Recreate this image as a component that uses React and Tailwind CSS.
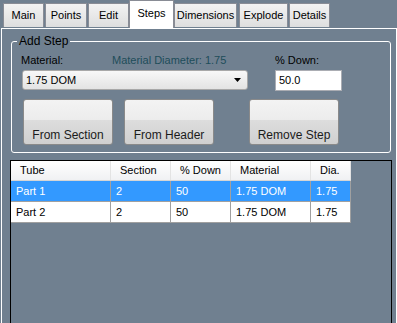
const tabs = [
  { label: "Main", w: "w-[41px]", gap: "mr-[1px]" },
  { label: "Points", w: "w-[42px]", gap: "mr-[1px]" },
  { label: "Edit", w: "w-[41px]", gap: "" },
  { label: "Steps", w: "w-[45px]", gap: "", active: true },
  { label: "Dimensions", w: "w-[63px]", gap: "mr-[2px]" },
  { label: "Explode", w: "w-[49px]", gap: "mr-[1px]" },
  { label: "Details", w: "w-[41px]", gap: "" },
];

const columns = [
  { label: "Tube", w: "w-[100px]" },
  { label: "Section", w: "w-[60px]" },
  { label: "% Down", w: "w-[60px]" },
  { label: "Material", w: "w-[80px]" },
  { label: "Dia.", w: "w-[40px]" },
];

const rows = [
  ["Part 1", "2", "50", "1.75 DOM", "1.75"],
  ["Part 2", "2", "50", "1.75 DOM", "1.75"],
];

export default function App() {
  return (
    <div className="w-[397px] h-[323px] overflow-hidden bg-[#708090] font-['Liberation_Sans',Arial,sans-serif] text-[11px] leading-[13px] text-black">
      {/* tab strip */}
      <div className="flex h-[28px] items-end pl-[3px]">
        {tabs.map((t) =>
          t.active ? (
            <div
              key={t.label}
              className={`${t.w} ${t.gap} flex h-[28px] items-center justify-center border-x border-t border-[#898c95] bg-white pb-[2px]`}
            >
              {t.label}
            </div>
          ) : (
            <div
              key={t.label}
              className={`${t.w} ${t.gap} mb-[1px] flex h-[24px] items-center justify-center border border-b-0 border-[#898c95] bg-linear-to-b from-[#f3f3f3] to-[#dedede]`}
            >
              {t.label}
            </div>
          )
        )}
      </div>

      {/* tab page */}
      <div className="ml-[1px] h-[300px] w-[396px] border-x border-t border-white">
        <fieldset className="ml-[9px] mt-[6px] w-[380px] rounded-[3px] border border-white px-0 pb-[7px]">
          <legend className="ml-[5px] px-[2px] text-[12px] leading-[13px]">Add Step</legend>

          <div className="flex pl-[9px] pt-[6px]">
            <span className="w-[91px]">Material:</span>
            <span className="w-[163px] text-[#1e4d5a]">Material Diameter: 1.75</span>
            <span>% Down:</span>
          </div>

          <div className="mt-[3px] flex items-start pl-[10px]">
            <div className="flex h-[20px] w-[226px] items-center justify-between rounded-[3px] border border-[#a8a8a8] bg-linear-to-b from-[#f8f8f8] to-[#e3e3e3] pl-[3px] pr-[6px]">
              <span>1.75 DOM</span>
              <svg width="7" height="4" viewBox="0 0 7 4">
                <path d="M0 0h7L3.5 4z" fill="#000" />
              </svg>
            </div>
            <div className="ml-[27px] flex h-[21px] w-[67px] items-center border border-[#abadb3] bg-white pl-[3px]">
              50.0
            </div>
          </div>

          <div className="mt-[8px] flex pl-[11px]">
            <StepButton label="From Section" />
            <div className="w-[11px]" />
            <StepButton label="From Header" />
            <div className="w-[35px]" />
            <StepButton label="Remove Step" />
          </div>
        </fieldset>

        {/* grid */}
        <div className="ml-[8px] mt-[7px] h-[200px] w-[382px] border border-black">
          <div className="flex h-[20px] w-[340px] border-b border-[#d5d5d5] bg-linear-to-b from-white to-[#f0f1f3]">
            {columns.map((c) => (
              <div key={c.label} className={`${c.w} flex items-center border-r border-[#e3e3e3] pl-[9px]`}>
                {c.label}
              </div>
            ))}
          </div>
          {rows.map((r, i) => (
            <div
              key={i}
              className={`flex h-[21px] w-[340px] border-b border-[#a0a0a0] ${i === 0 ? "bg-[#3399ff] text-white" : "bg-white"}`}
            >
              {r.map((v, j) => (
                <div key={j} className={`${columns[j].w} flex items-center border-r border-[#a0a0a0] pl-[5px]`}>
                  {v}
                </div>
              ))}
            </div>
          ))}
        </div>
      </div>
    </div>
  );
}

function StepButton({ label }) {
  return (
    <div className="flex h-[46px] w-[90px] items-end justify-center rounded-[3px] border border-[#8a8a8a] bg-[linear-gradient(to_bottom,#f3f3f3_0%,#ececec_46%,#dddddd_46%,#d0d0d0_100%)] pb-[2px] text-[12px] text-[#1b1b1b]">
      {label}
    </div>
  );
}
